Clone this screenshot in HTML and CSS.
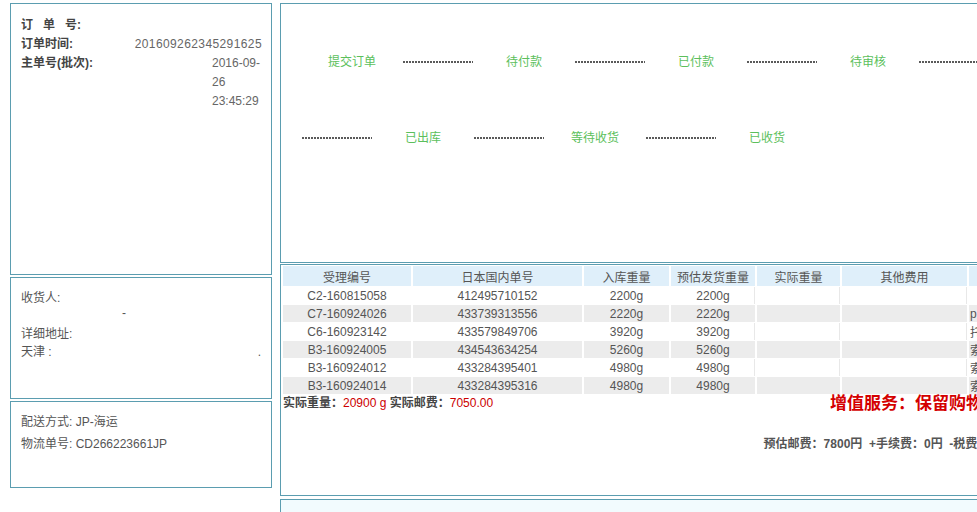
FILE: index.html
```
<!DOCTYPE html>
<html lang="zh-CN">
<head>
    <meta charset="UTF-8">
    <title>订单详情</title>
    <link rel="stylesheet" href="styles.css">
</head>
<body>
    <div class="page">
        <div class="side">
            <div class="box order-box">
                <div class="info-row"><span class="label"><span class="spaced">订单</span>号:</span></div>
                <div class="info-row">
                    <span class="label">订单时间:</span>
                    <span class="value">201609262345291625</span>
                </div>
                <div class="info-row">
                    <span class="label">主单号(批次):</span>
                    <span class="value date">2016-09-26 23:45:29</span>
                </div>
            </div>

            <div class="box addr-box">
                <div>收货人:</div>
                <div class="blank-line">-</div>
                <div>详细地址:</div>
                <div class="addr-line"><span>天津 :</span><span>.</span></div>
            </div>

            <div class="box ship-box">
                <div>配送方式: JP-海运</div>
                <div>物流单号: CD266223661JP</div>
            </div>
        </div>

        <div class="main">
            <div class="box steps-box">
                <div class="steps steps-first">
                    <span class="step">提交订单</span>
                    <span class="step"><i class="dots"></i></span>
                    <span class="step">待付款</span>
                    <span class="step"><i class="dots"></i></span>
                    <span class="step">已付款</span>
                    <span class="step"><i class="dots"></i></span>
                    <span class="step">待审核</span>
                    <span class="step"><i class="dots"></i></span>
                </div>
                <div class="steps steps-second">
                    <span class="step"><i class="dots"></i></span>
                    <span class="step">已出库</span>
                    <span class="step"><i class="dots"></i></span>
                    <span class="step">等待收货</span>
                    <span class="step"><i class="dots"></i></span>
                    <span class="step">已收货</span>
                </div>
            </div>

            <div class="box goods-box">
                <table class="goods">
                    <thead>
                        <tr>
                            <th class="c1">受理编号</th>
                            <th class="c2">日本国内单号</th>
                            <th class="c3">入库重量</th>
                            <th class="c4">预估发货重量</th>
                            <th class="c5">实际重量</th>
                            <th class="c6">其他费用</th>
                            <th class="c7">备注</th>
                        </tr>
                    </thead>
                    <tbody>
                        <tr><td>C2-160815058</td><td>412495710152</td><td>2200g</td><td>2200g</td><td></td><td></td><td class="note"></td></tr>
                        <tr><td>C7-160924026</td><td>433739313556</td><td>2220g</td><td>2220g</td><td></td><td></td><td class="note">p</td></tr>
                        <tr><td>C6-160923142</td><td>433579849706</td><td>3920g</td><td>3920g</td><td></td><td></td><td class="note">托</td></tr>
                        <tr><td>B3-160924005</td><td>434543634254</td><td>5260g</td><td>5260g</td><td></td><td></td><td class="note">索</td></tr>
                        <tr><td>B3-160924012</td><td>433284395401</td><td>4980g</td><td>4980g</td><td></td><td></td><td class="note">索</td></tr>
                        <tr><td>B3-160924014</td><td>433284395316</td><td>4980g</td><td>4980g</td><td></td><td></td><td class="note">索</td></tr>
                    </tbody>
                </table>

                <div class="summary">
                    <span><b>实际重量：</b><em>20900 g</em> <b>实际邮费：</b><em>7050.00</em></span>
                    <span class="extra-note">增值服务：保留购物小票</span>
                </div>
                <div class="fees">预估邮费：7800円 &nbsp;+手续费：0円 &nbsp;-税费：0円</div>
            </div>

            <div class="box more-box"></div>
        </div>
    </div>
</body>
</html>
```

FILE: styles.css
```
html, body {
    overflow: hidden;
}
body {
    margin: 3px 0 0 10px;
    font-family: "Liberation Sans", Arial, "Noto Sans CJK SC", sans-serif;
    font-size: 12px;
    color: #555;
    background: #fff;
}
.page {
    display: flex;
    gap: 8px;
    width: 1200px;
}
.box {
    border: 1px solid #5b9db0;
    box-sizing: border-box;
}

/* 左侧 */
.side {
    width: 262px;
    display: flex;
    flex-direction: column;
    gap: 2px;
}
.order-box {
    height: 272px;
    padding: 12px 9px 0 10px;
    line-height: 19px;
}
.info-row {
    display: flex;
    justify-content: space-between;
}
.info-row .label {
    font-weight: bold;
    color: #444;
}
.spaced {
    letter-spacing: 10px;
}
.info-row .value {
    color: #666;
    letter-spacing: 0.4px;
}
.info-row .date {
    width: 50px;
    overflow-wrap: anywhere;
    letter-spacing: 0;
}
.addr-box {
    height: 122px;
    padding: 11px 10px 0 10px;
    line-height: 18px;
    color: #555;
}
.blank-line {
    padding-left: 101px;
    line-height: 12px;
    margin-bottom: 6px;
}
.addr-line {
    display: flex;
    justify-content: space-between;
}
.ship-box {
    height: 87px;
    padding: 9px 10px 0 10px;
    line-height: 22px;
    color: #555;
}

/* 右侧 */
.main {
    width: 900px;
    display: flex;
    flex-direction: column;
}
.steps-box {
    height: 260px;
    padding-top: 49px;
}
.steps {
    display: flex;
    line-height: 18px;
}
.steps-first {
    margin-left: 28px;
}
.steps-second {
    margin-left: 13px;
    margin-top: 58px;
}
.step {
    width: 86px;
    flex: none;
    display: flex;
    align-items: center;
    justify-content: center;
    color: #5cbf5c;
}
.dots {
    display: block;
    width: 70px;
    height: 2px;
    background-image: linear-gradient(to right, #5a5a5a 0 2px, transparent 2px 3px);
    background-size: 3px 2px;
}

.goods-box {
    margin-top: 1px;
    height: 232px;
}
.goods {
    width: 100%;
    border-collapse: separate;
    border-spacing: 2px 1px;
    table-layout: fixed;
}
.goods th {
    height: 20px;
    padding: 0;
    background: #dfeffa;
    font-weight: normal;
    color: #555;
}
.goods td {
    height: 17px;
    padding: 0;
    text-align: center;
    color: #555;
}
.goods tbody tr:nth-child(even) td {
    background: #ececec;
}
.goods tbody tr:nth-child(odd) td + td + td + td {
    box-shadow: inset -1px 0 0 #e8e8e8;
}
.goods .note {
    text-align: left;
    padding-left: 1px;
}
.c1 { width: 128px; }
.c2 { width: 169px; }
.c3 { width: 85px; }
.c4 { width: 84px; }
.c5 { width: 83px; }
.c6 { width: 125px; }

.summary {
    display: flex;
    align-items: center;
    padding-left: 2px;
    line-height: 17px;
}
.summary b {
    color: #444;
}
.summary em {
    font-style: normal;
    color: #cc0000;
}
.extra-note {
    margin-left: auto;
    margin-right: 162px;
    font-size: 17px;
    font-weight: bold;
    color: #d40000;
}
.fees {
    margin-top: 22px;
    text-align: right;
    padding-right: 171px;
    font-weight: bold;
    color: #555;
}

.more-box {
    margin-top: 3px;
    height: 40px;
    background: #f2fbfe;
}
```
